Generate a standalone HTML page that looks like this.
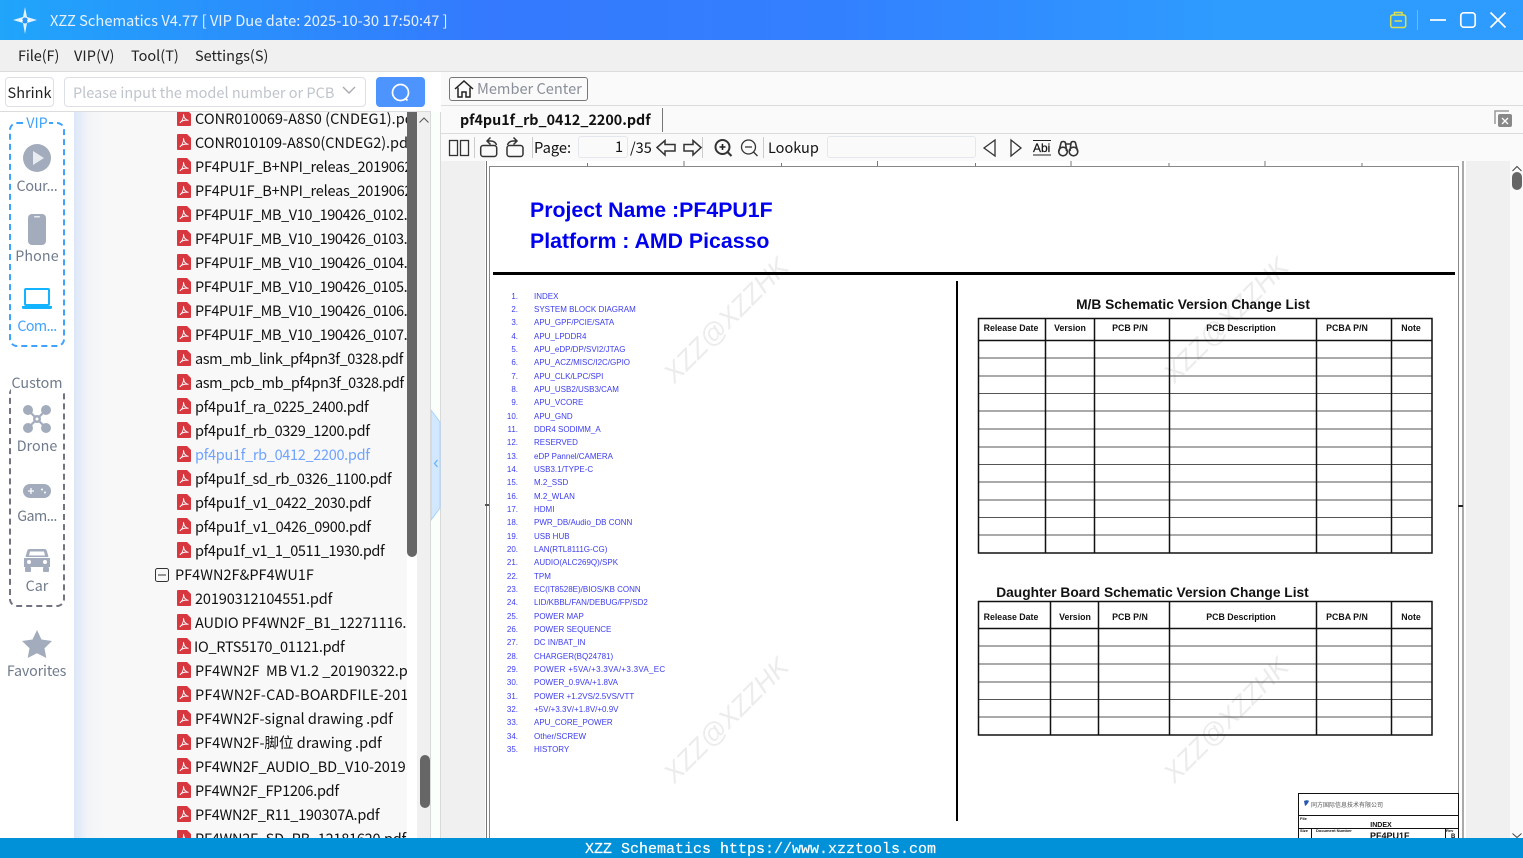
<!DOCTYPE html>
<html><head><meta charset="utf-8"><title>XZZ Schematics</title>
<style>
*{box-sizing:border-box}
html,body{margin:0;padding:0;width:1523px;height:858px;overflow:hidden;background:#fff;font-family:"Noto Sans CJK SC","Liberation Sans",sans-serif;color:#111}
.a{position:absolute}
.t{position:absolute;white-space:nowrap;line-height:20px}
#title{left:0;top:0;width:1523px;height:40px;background:linear-gradient(90deg,#20a5fb 0,#3479fe 32%,#3380ff 55%,#2e9bff 80%,#2e9bff 100%)}
#menu{left:0;top:40px;width:1523px;height:32px;background:#f0f0f0;border-bottom:1px solid #dcdcdc}
#menu span{position:absolute;top:6px;font-size:14.5px;line-height:20px;color:#222}
#tree{left:74px;top:112px;width:333px;height:726px;background:linear-gradient(90deg,#dbe6f7 0,#f2f4f8 14px,#f8f8f8 30px);overflow:hidden}
.f{position:absolute;left:121px;width:212px;height:24px;margin-top:1px;font-size:14.5px;line-height:24px;white-space:nowrap;overflow:hidden;color:#111;letter-spacing:-.32px}
.ic{position:absolute;left:103px;width:14px;height:16px}
.side{position:absolute;font-size:14.3px;color:#6f7a8c;line-height:20px;width:74px;text-align:center;white-space:nowrap;left:0}
.toc{position:absolute;left:534px;margin-top:1px;font:8px/10px "Liberation Sans",sans-serif;color:#3c3cf0;white-space:nowrap}
.n{position:absolute;left:498px;width:20px;margin-top:1px;text-align:right;font:8px/10px "Liberation Sans",sans-serif;color:#3c3cf0}
.wm{position:absolute;font:italic 26.5px/36px "Liberation Sans",sans-serif;color:#ececec;white-space:nowrap;transform:rotate(-45deg);transform-origin:center;width:200px;text-align:center}
</style></head><body>

<div class="a" id="title"></div>
<svg class="a" style="left:12px;top:7px" width="26" height="27" viewBox="0 0 26 27"><path d="M13 0 L15 10 L25 13 L15 16 L13 27 L11 16 L1 13 L11 10 Z" fill="#e4f2ff"/><circle cx="13" cy="13.5" r="3" fill="#2a95f8"/><circle cx="9.5" cy="13.5" r="1.3" fill="#fff"/><circle cx="16.5" cy="13.5" r="1.3" fill="#fff"/></svg>
<div class="t" style="left:50px;top:11px;font-size:14.7px;color:#e8f2ff">XZZ Schematics V4.77 [ VIP Due date: 2025-10-30 17:50:47 ]</div>
<svg class="a" style="left:1385px;top:8px" width="130" height="24" viewBox="0 0 130 24"><g fill="none" stroke="#dde24a" stroke-width="1.5"><rect x="5.7" y="7" width="15" height="12.5" rx="2"/><path d="M9.5 7V4.5h7.5V7M9.5 13h7.5"/></g><path d="M32.5 2v20" stroke="#6fb6ff" stroke-width="1"/><g fill="none" stroke="#fff" stroke-width="1.7"><path d="M45 12h16"/><rect x="75.8" y="4.8" width="14.4" height="14.4" rx="3"/><path d="M105.5 4.5l15 15M120.5 4.5l-15 15"/></g></svg>

<div class="a" id="menu"><span style="left:18px;letter-spacing:-.1px">File(F)</span><span style="left:74px;letter-spacing:.1px">VIP(V)</span><span style="left:131px">Tool(T)</span><span style="left:195px">Settings(S)</span></div>

<!-- search row -->
<div class="a" style="left:0;top:72px;width:431px;height:40px;background:#fff;border-bottom:1px solid #dcdcdc"></div>
<div class="a" style="left:5px;top:77px;width:49px;height:30px;border:1px solid #dcdfe6;border-radius:4px;font-size:14.5px;line-height:30px;text-align:center;color:#222;background:#fff">Shrink</div>
<div class="a" style="left:64px;top:77px;width:302px;height:30px;border:1px solid #dcdfe6;border-radius:4px;background:#fff"></div>
<div class="t" style="left:73px;top:83px;font-size:14.5px;color:#c0c4cc">Please input the model number or PCB</div>
<svg class="a" style="left:341px;top:85px" width="16" height="12"><path d="M2 2l6 6 6-6" fill="none" stroke="#a8abb2" stroke-width="1.4"/></svg>
<div class="a" style="left:376px;top:77px;width:49px;height:30px;border-radius:4px;background:#4d94ff"></div>
<svg class="a" style="left:390px;top:82px" width="22" height="22"><circle cx="10.5" cy="10.5" r="8" fill="none" stroke="#fff" stroke-width="1.7"/><path d="M15 16l2.5 2.5" stroke="#fff" stroke-width="1.7"/></svg>

<!-- left icon rail -->
<div class="a" style="left:9px;top:122px;width:56px;height:225px;border:2px dashed #3fa2ff;border-radius:8px"></div>
<div class="side" style="top:113px;color:#3fa2ff;background:none"><span style="background:#fff;padding:0 1px">VIP</span></div>
<svg class="a" style="left:23px;top:144px" width="28" height="28"><circle cx="14" cy="14" r="14" fill="#a3acbd"/><path d="M10 7l11 7-11 7z" fill="#e8ebf0"/></svg>
<div class="side" style="top:176px;letter-spacing:-.3px">Cour...</div>
<svg class="a" style="left:28px;top:214px" width="18" height="31"><rect width="18" height="31" rx="4" fill="#a3acbd"/><rect x="6" y="2" width="6" height="1.5" rx=".7" fill="#e8ebf0"/></svg>
<div class="side" style="top:246px;letter-spacing:.1px">Phone</div>
<svg class="a" style="left:22px;top:288px" width="30" height="21"><rect x="3" y="1" width="24" height="16" rx="1" fill="none" stroke="#12b4ff" stroke-width="2"/><path d="M0 18h30v1.5a1.5 1.5 0 0 1-1.5 1.5h-27A1.5 1.5 0 0 1 0 19.500z" fill="#12b4ff"/></svg>
<div class="side" style="top:316px;color:#3fa2ff;letter-spacing:-.6px">Com...</div>

<div class="a" style="left:9px;top:386px;width:56px;height:221px;border:2px dashed #6f7480;border-radius:8px"></div>
<div class="side" style="top:373px"><span style="background:#fff">Custom</span></div>
<svg class="a" style="left:22px;top:404px" width="30" height="30" viewBox="0 0 30 30"><g fill="none" stroke="#a3acbd" stroke-width="2.2"><path d="M7 7l16 16M23 7L7 23"/></g><g fill="#a3acbd"><circle cx="6" cy="6" r="5"/><circle cx="24" cy="6" r="5"/><circle cx="6" cy="24" r="5"/><circle cx="24" cy="24" r="5"/><circle cx="15" cy="15" r="4"/></g><circle cx="15" cy="15" r="1.500" fill="#fff"/></svg>
<div class="side" style="top:436px">Drone</div>
<svg class="a" style="left:23px;top:484px" width="28" height="14"><rect width="28" height="14" rx="7" fill="#a3acbd"/><path d="M5 7h6M8 4v6" stroke="#fff" stroke-width="1.3"/><circle cx="19" cy="5.500" r="1" fill="#fff"/><circle cx="22" cy="8.500" r="1" fill="#fff"/></svg>
<div class="side" style="top:506px;letter-spacing:-.6px">Gam...</div>
<svg class="a" style="left:23px;top:548px" width="28" height="24" viewBox="0 0 28 24"><path d="M7 1h14a3 3 0 0 1 3 2.500L25.500 9H2.500L4 3.500A3 3 0 0 1 7 1z M1 10h26v9H1z" fill="#a3acbd"/><rect x="2" y="19" width="6" height="5" rx="1" fill="#a3acbd"/><rect x="20" y="19" width="6" height="5" rx="1" fill="#a3acbd"/><path d="M7 3.500h14l1 4H6z" fill="#fff"/><circle cx="6" cy="14" r="2" fill="#fff"/><circle cx="22" cy="14" r="2" fill="#fff"/></svg>
<div class="side" style="top:576px">Car</div>
<svg class="a" style="left:22px;top:630px" width="30" height="28" viewBox="0 0 30 28"><path d="M15 0l4.500 9.500L30 11l-7.500 7.300L24.300 28 15 23.200 5.700 28l1.800-9.700L0 11l10.500-1.500z" fill="#a3acbd"/></svg>
<div class="side" style="top:661px;letter-spacing:-.15px;margin-left:-.5px">Favorites</div>

<!-- file tree -->
<div class="a" id="tree">
<svg width="0" height="0" style="position:absolute"><defs><symbol id="pdf" viewBox="0 0 14 16"><path d="M1 0h9l4 4v11a1 1 0 0 1-1 1H1a1 1 0 0 1-1-1V1a1 1 0 0 1 1-1z" fill="#d7373f"/><path d="M2.800 12.800C5 11.500 7 7.500 6.500 4.200 6.800 7.500 8.500 10 11.500 10.300 8.500 9.800 5 10.600 2.800 12.800z" fill="none" stroke="#fff" stroke-width=".9"/></symbol></defs></svg>
<svg class="ic" style="top:-2px"><use href="#pdf"/></svg><div class="f" style="top:-6px;letter-spacing:.05px">CONR010069-A8S0 (CNDEG1).pdf</div>
<svg class="ic" style="top:22px"><use href="#pdf"/></svg><div class="f" style="top:18px;letter-spacing:-.05px">CONR010109-A8S0(CNDEG2).pdf</div>
<svg class="ic" style="top:46px"><use href="#pdf"/></svg><div class="f" style="top:42px;letter-spacing:-.22px">PF4PU1F_B+NPI_releas_20190620</div>
<svg class="ic" style="top:70px"><use href="#pdf"/></svg><div class="f" style="top:66px;letter-spacing:-.22px">PF4PU1F_B+NPI_releas_20190621</div>
<svg class="ic" style="top:94px"><use href="#pdf"/></svg><div class="f" style="top:90px;letter-spacing:-.42px">PF4PU1F_MB_V10_190426_0102.pdf</div>
<svg class="ic" style="top:118px"><use href="#pdf"/></svg><div class="f" style="top:114px;letter-spacing:-.42px">PF4PU1F_MB_V10_190426_0103.pdf</div>
<svg class="ic" style="top:142px"><use href="#pdf"/></svg><div class="f" style="top:138px;letter-spacing:-.42px">PF4PU1F_MB_V10_190426_0104.pdf</div>
<svg class="ic" style="top:166px"><use href="#pdf"/></svg><div class="f" style="top:162px;letter-spacing:-.42px">PF4PU1F_MB_V10_190426_0105.pdf</div>
<svg class="ic" style="top:190px"><use href="#pdf"/></svg><div class="f" style="top:186px;letter-spacing:-.42px">PF4PU1F_MB_V10_190426_0106.pdf</div>
<svg class="ic" style="top:214px"><use href="#pdf"/></svg><div class="f" style="top:210px;letter-spacing:-.42px">PF4PU1F_MB_V10_190426_0107.pdf</div>
<svg class="ic" style="top:238px"><use href="#pdf"/></svg><div class="f" style="top:234px;letter-spacing:-.41px">asm_mb_link_pf4pn3f_0328.pdf</div>
<svg class="ic" style="top:262px"><use href="#pdf"/></svg><div class="f" style="top:258px;letter-spacing:-.41px">asm_pcb_mb_pf4pn3f_0328.pdf</div>
<svg class="ic" style="top:286px"><use href="#pdf"/></svg><div class="f" style="top:282px">pf4pu1f_ra_0225_2400.pdf</div>
<svg class="ic" style="top:310px"><use href="#pdf"/></svg><div class="f" style="top:306px">pf4pu1f_rb_0329_1200.pdf</div>
<svg class="ic" style="top:334px"><use href="#pdf"/></svg><div class="f" style="top:330px;color:#6fa3ff">pf4pu1f_rb_0412_2200.pdf</div>
<svg class="ic" style="top:358px"><use href="#pdf"/></svg><div class="f" style="top:354px;letter-spacing:-.37px">pf4pu1f_sd_rb_0326_1100.pdf</div>
<svg class="ic" style="top:382px"><use href="#pdf"/></svg><div class="f" style="top:378px">pf4pu1f_v1_0422_2030.pdf</div>
<svg class="ic" style="top:406px"><use href="#pdf"/></svg><div class="f" style="top:402px">pf4pu1f_v1_0426_0900.pdf</div>
<svg class="ic" style="top:430px"><use href="#pdf"/></svg><div class="f" style="top:426px;letter-spacing:-.39px">pf4pu1f_v1_1_0511_1930.pdf</div>
<svg class="a" style="left:81px;top:456px" width="14" height="14"><rect x=".5" y=".5" width="13" height="13" rx="2" fill="none" stroke="#333"/><path d="M3 7h8" stroke="#333"/></svg><div class="f" style="top:450px;left:101px;letter-spacing:0">PF4WN2F&amp;PF4WU1F</div>
<svg class="ic" style="top:478px"><use href="#pdf"/></svg><div class="f" style="top:474px;letter-spacing:-.12px">20190312104551.pdf</div>
<svg class="ic" style="top:502px"><use href="#pdf"/></svg><div class="f" style="top:498px;letter-spacing:-.1px">AUDIO PF4WN2F_B1_12271116.pdf</div>
<svg class="ic" style="top:526px"><use href="#pdf"/></svg><div class="f" style="top:522px;letter-spacing:-.28px;margin-left:-1px">IO_RTS5170_01121.pdf</div>
<svg class="ic" style="top:550px"><use href="#pdf"/></svg><div class="f" style="top:546px;letter-spacing:0">PF4WN2F&nbsp; MB V1.2 _20190322.pdf</div>
<svg class="ic" style="top:574px"><use href="#pdf"/></svg><div class="f" style="top:570px;letter-spacing:.2px">PF4WN2F-CAD-BOARDFILE-2019</div>
<svg class="ic" style="top:598px"><use href="#pdf"/></svg><div class="f" style="top:594px;letter-spacing:0">PF4WN2F-signal drawing .pdf</div>
<svg class="ic" style="top:622px"><use href="#pdf"/></svg><div class="f" style="top:618px;letter-spacing:0">PF4WN2F-脚位 drawing .pdf</div>
<svg class="ic" style="top:646px"><use href="#pdf"/></svg><div class="f" style="top:642px;letter-spacing:-.14px">PF4WN2F_AUDIO_BD_V10-2019</div>
<svg class="ic" style="top:670px"><use href="#pdf"/></svg><div class="f" style="top:666px;letter-spacing:-.27px">PF4WN2F_FP1206.pdf</div>
<svg class="ic" style="top:694px"><use href="#pdf"/></svg><div class="f" style="top:690px;letter-spacing:-.24px">PF4WN2F_R11_190307A.pdf</div>
<svg class="ic" style="top:718px"><use href="#pdf"/></svg><div class="f" style="top:714px;letter-spacing:-.24px">PF4WN2F_SD_RB_12181620.pdf</div>
</div>
<!-- tree scrollbars -->
<div class="a" style="left:407px;top:112px;width:10px;height:445px;background:#666;border-radius:0 0 5px 5px"></div>
<div class="a" style="left:417px;top:112px;width:14px;height:726px;background:#f0f0f0;border-right:1px solid #d9d9d9"></div>
<svg class="a" style="left:418px;top:116px" width="12" height="8"><path d="M1.500 6.500L6 2l4.500 4.500" fill="none" stroke="#555"/></svg>
<div class="a" style="left:420px;top:755px;width:10px;height:53px;background:#666;border-radius:5px"></div>
<div class="a" style="left:431px;top:112px;width:10px;height:726px;background:#fbfffb;border-right:1px solid #d9d9d9"></div>
<svg class="a" style="left:431px;top:408px" width="10" height="113"><path d="M0 2L9 14V100L0 112z" fill="#d2e8ff" stroke="#a9d3fb"/><path d="M6.500 52L3.500 55.500 6.500 59" fill="none" stroke="#6cb3f7" stroke-width="1.300"/></svg>

<!-- right header -->
<div class="a" style="left:441px;top:72px;width:1082px;height:34px;background:#fafafa;border-bottom:1px solid #dcdcdc"></div>
<div class="a" style="left:449px;top:77px;width:139px;height:24px;border:1px solid #777;border-radius:3px"></div>
<svg class="a" style="left:454px;top:79px" width="20" height="20" viewBox="0 0 20 20"><path d="M1 10L10 2l9 8M4 8.500V18h4v-5h4v5h4V8.500" fill="none" stroke="#222" stroke-width="1.500"/></svg>
<div class="t" style="left:477px;top:79px;font-size:14.6px;color:#8a8f99">Member Center</div>
<div class="a" style="left:441px;top:106px;width:1082px;height:28px;background:#fafafa;border-bottom:1px solid #dcdcdc"></div>
<div class="t" style="left:460px;top:110px;font:bold 14.3px/20px 'Noto Sans CJK SC','Liberation Sans',sans-serif;color:#111">pf4pu1f_rb_0412_2200.pdf</div>
<div class="a" style="left:662px;top:108px;width:1px;height:24px;background:#777"></div>
<svg class="a" style="left:1493px;top:109px" width="20" height="20"><path d="M2 15V2h14" fill="none" stroke="#999" stroke-width="1.500"/><rect x="5" y="5" width="14" height="13" rx="2" fill="#888"/><path d="M9 9l6 6M15 9l-6 6" stroke="#fff" stroke-width="1.300"/></svg>

<!-- toolbar -->
<div class="a" style="left:441px;top:134px;width:1082px;height:27px;background:#fafafa"></div>
<svg class="a" style="left:441px;top:134px" width="680" height="27" viewBox="0 0 680 27">
<g fill="none" stroke="#333" stroke-width="1.300">
<rect x="8.500" y="6.500" width="8" height="15"/><rect x="19.500" y="6.500" width="8" height="15"/>
<rect x="39.700" y="11.500" width="16" height="11" rx="2.500" stroke-width="1.500"/><path d="M46 7h4c3 0 5 2 5.500 4M49.500 3.500L46 7l3.500 3.500" stroke-width="1.500"/>
<rect x="66" y="11.500" width="16" height="11" rx="2.500" stroke-width="1.500"/><path d="M76 7h-4c-3 0-5 2-5.500 4M72.500 3.500L76 7l-3.500 3.500" stroke-width="1.500"/>
<path d="M216 13.500l8-7v4h10v6.500h-10v4z" stroke-width="1.500"/>
<path d="M260 13.500l-8-7v4h-9v6.500h9v4z" stroke-width="1.500"/>
<circle cx="281.500" cy="13" r="7" stroke-width="2"/><path d="M286.500 18l4 4" stroke-width="2"/>
<circle cx="307.500" cy="13" r="7"/><path d="M312.500 18l4 4M304 13h7"/>
<path d="M554 6l-11 8 11 8z"/><path d="M570 6l10 8-10 8z"/>
</g>
<path d="M278.500 13h6M281.500 10v6" stroke="#222" stroke-width="1.600"/>
<g stroke="#ccc"><path d="M33.500 3v21M91.500 3v21M261.500 3v21M322.500 3v21"/></g>
<g fill="none" stroke="#333" stroke-width="1.600"><circle cx="622" cy="17.500" r="4.300"/><circle cx="632.500" cy="17.500" r="4.300"/><path d="M618 17l2-8c.4-2 4-2 4.500 0l1 8M636.500 17l-2-8c-.4-2-4-2-4.500 0l-1 8M624.500 10h5"/></g>
<path d="M592 6.500h18M592 21h18" stroke="#222"/>
</svg>
<div class="t" style="left:534px;top:138px;font-size:14.7px">Page:</div>
<div class="a" style="left:578px;top:136px;width:50px;height:22px;border:1px solid #e4e7ed;border-radius:3px;background:#fafafa;font-size:14.500px;line-height:20px;text-align:right;padding-right:4px">1</div>
<div class="t" style="left:630px;top:138px;font-size:14.500px">/35</div>
<div class="t" style="left:768px;top:138px;font-size:14.500px">Lookup</div>
<div class="a" style="left:827px;top:136px;width:149px;height:22px;border:1px solid #e4e7ed;border-radius:3px;background:#fafafa"></div>
<div class="t" style="left:1033px;top:138px;font:12px/20px 'Liberation Sans',sans-serif;color:#111;-webkit-text-stroke:.2px #111">Abi</div>

<!-- page panel -->
<div class="a" style="left:441px;top:161px;width:1069px;height:677px;background:#f0f0f0"></div>
<div class="a" style="left:1510px;top:161px;width:13px;height:677px;background:#fafafa"></div>
<svg class="a" style="left:1511px;top:165px" width="12" height="7"><path d="M1.500 6L6 1.500 10.500 6" fill="none" stroke="#444"/></svg>
<div class="a" style="left:1512px;top:172px;width:10px;height:18px;background:#666;border-radius:5px"></div>
<svg class="a" style="left:1511px;top:833px" width="12" height="5"><path d="M1.500 .5L6 4.500 10.500 .5" fill="none" stroke="#444"/></svg>
<div class="a" style="left:485px;top:161px;width:981px;height:677px;background:#fff"></div>
<div class="a" style="left:486px;top:161px;width:1px;height:677px;background:#777"></div>
<div class="a" style="left:1462px;top:161px;width:2px;height:677px;background:#aaa"></div>
<div class="a" style="left:489px;top:166px;width:970px;height:672px;background:#fff;border:1px solid #888;border-width:1px 1px 0 1px"></div>
<svg class="a" style="left:489px;top:161px" width="970" height="5"><path d="M98.500 2v3M195 0v5M292.500 2v3M388.500 0v5M486.500 2v3M582 0v5M680 2v3M776 0v5M873 2v3" stroke="#777"/></svg>

<!-- PDF -->
<div class="wm" style="left:626px;top:302px">XZZ@XZZHK</div>
<div class="wm" style="left:1126px;top:302px">XZZ@XZZHK</div>
<div class="wm" style="left:626px;top:702px">XZZ@XZZHK</div>
<div class="wm" style="left:1126px;top:702px">XZZ@XZZHK</div>

<div class="t" style="left:530px;top:197px;font:bold 21.3px/26px 'Liberation Sans',sans-serif;color:#0000f0">Project Name :PF4PU1F</div>
<div class="t" style="left:530px;top:228px;font:bold 21.3px/26px 'Liberation Sans',sans-serif;color:#0000f0">Platform : AMD Picasso</div>
<div class="a" style="left:493px;top:272px;width:962px;height:2.500px;background:#000"></div>
<div class="a" style="left:956px;top:281px;width:2px;height:540px;background:#000"></div>

<div class="n" style="top:291px">1.</div><div class="toc" style="top:291px">INDEX</div>
<div class="n" style="top:304px">2.</div><div class="toc" style="top:304px">SYSTEM BLOCK DIAGRAM</div>
<div class="n" style="top:317px">3.</div><div class="toc" style="top:317px">APU_GPF/PCIE/SATA</div>
<div class="n" style="top:331px">4.</div><div class="toc" style="top:331px">APU_LPDDR4</div>
<div class="n" style="top:344px">5.</div><div class="toc" style="top:344px">APU_eDP/DP/SVI2/JTAG</div>
<div class="n" style="top:357px">6.</div><div class="toc" style="top:357px">APU_ACZ/MISC/I2C/GPIO</div>
<div class="n" style="top:371px">7.</div><div class="toc" style="top:371px">APU_CLK/LPC/SPI</div>
<div class="n" style="top:384px">8.</div><div class="toc" style="top:384px">APU_USB2/USB3/CAM</div>
<div class="n" style="top:397px">9.</div><div class="toc" style="top:397px">APU_VCORE</div>
<div class="n" style="top:411px">10.</div><div class="toc" style="top:411px">APU_GND</div>
<div class="n" style="top:424px">11.</div><div class="toc" style="top:424px">DDR4 SODIMM_A</div>
<div class="n" style="top:437px">12.</div><div class="toc" style="top:437px">RESERVED</div>
<div class="n" style="top:451px">13.</div><div class="toc" style="top:451px">eDP Pannel/CAMERA</div>
<div class="n" style="top:464px">14.</div><div class="toc" style="top:464px">USB3.1/TYPE-C</div>
<div class="n" style="top:477px">15.</div><div class="toc" style="top:477px">M.2_SSD</div>
<div class="n" style="top:491px">16.</div><div class="toc" style="top:491px">M.2_WLAN</div>
<div class="n" style="top:504px">17.</div><div class="toc" style="top:504px">HDMI</div>
<div class="n" style="top:517px">18.</div><div class="toc" style="top:517px">PWR_DB/Audio_DB CONN</div>
<div class="n" style="top:531px">19.</div><div class="toc" style="top:531px">USB HUB</div>
<div class="n" style="top:544px">20.</div><div class="toc" style="top:544px">LAN(RTL8111G-CG)</div>
<div class="n" style="top:557px">21.</div><div class="toc" style="top:557px">AUDIO(ALC269Q)/SPK</div>
<div class="n" style="top:571px">22.</div><div class="toc" style="top:571px">TPM</div>
<div class="n" style="top:584px">23.</div><div class="toc" style="top:584px">EC(IT8528E)/BIOS/KB CONN</div>
<div class="n" style="top:597px">24.</div><div class="toc" style="top:597px">LID/KBBL/FAN/DEBUG/FP/SD2</div>
<div class="n" style="top:611px">25.</div><div class="toc" style="top:611px">POWER MAP</div>
<div class="n" style="top:624px">26.</div><div class="toc" style="top:624px">POWER SEQUENCE</div>
<div class="n" style="top:637px">27.</div><div class="toc" style="top:637px">DC IN/BAT_IN</div>
<div class="n" style="top:651px">28.</div><div class="toc" style="top:651px">CHARGER(BQ24781)</div>
<div class="n" style="top:664px">29.</div><div class="toc" style="top:664px;letter-spacing:.3px">POWER +5VA/+3.3VA/+3.3VA_EC</div>
<div class="n" style="top:677px">30.</div><div class="toc" style="top:677px">POWER_0.9VA/+1.8VA</div>
<div class="n" style="top:691px">31.</div><div class="toc" style="top:691px">POWER +1.2VS/2.5VS/VTT</div>
<div class="n" style="top:704px">32.</div><div class="toc" style="top:704px">+5V/+3.3V/+1.8V/+0.9V</div>
<div class="n" style="top:717px">33.</div><div class="toc" style="top:717px">APU_CORE_POWER</div>
<div class="n" style="top:731px">34.</div><div class="toc" style="top:731px">Other/SCREW</div>
<div class="n" style="top:744px">35.</div><div class="toc" style="top:744px">HISTORY</div>

<svg class="a" style="left:970px;top:290px" width="490" height="548" viewBox="970 290 490 548" font-family="Liberation Sans" font-weight="bold" fill="#111">
<text x="1193" y="309" font-size="13.75" text-anchor="middle">M/B Schematic Version Change List</text>
<g stroke="#555" stroke-width="1"><path d="M978 358h454M978 376h454M978 393.500h454M978 411h454M978 429h454M978 447h454M978 464.500h454M978 482h454M978 500h454M978 517.500h454M978 535h454"/></g>
<g stroke="#111" stroke-width="1.500" fill="none"><rect x="978.500" y="318.500" width="453.500" height="234.500"/><path d="M978 340.500h454M1045.500 318v235M1094.500 318v235M1169.500 318v235M1316.500 318v235M1391.500 318v235"/></g>
<g font-size="8.800" text-anchor="middle"><text x="1011" y="331">Release Date</text><text x="1070" y="331">Version</text><text x="1130" y="331">PCB P/N</text><text x="1241" y="331">PCB Description</text><text x="1347" y="331">PCBA P/N</text><text x="1411" y="331">Note</text></g>
<text x="1152.500" y="597" font-size="13.75" text-anchor="middle">Daughter Board Schematic Version Change List</text>
<g stroke="#555" stroke-width="1"><path d="M978 646h454M978 664h454M978 682h454M978 699.500h454M978 717h454"/></g>
<g stroke="#111" stroke-width="1.500" fill="none"><rect x="978.500" y="601.500" width="453.500" height="133.500"/><path d="M978 628.500h454M1050.500 601v134M1098.500 601v134M1169.500 601v134M1316.500 601v134M1391.500 601v134"/></g>
<g font-size="8.800" text-anchor="middle"><text x="1011" y="620">Release Date</text><text x="1075" y="620">Version</text><text x="1130" y="620">PCB P/N</text><text x="1241" y="620">PCB Description</text><text x="1347" y="620">PCBA P/N</text><text x="1411" y="620">Note</text></g>
<!-- title block -->
<g stroke="#111" stroke-width="1" fill="none"><path d="M1298.500 838V793.500H1458.500V838M1298 815.500h161M1298 828.500h161M1311.500 828v10M1445.500 828v10"/></g>
<path d="M1304 801c2-1 4-1 5 0-1 2-2 4-4 5z" fill="#2a5ab0"/>
<text x="1311" y="807" font-size="6" font-weight="normal" fill="#555" font-family="Noto Sans CJK SC">同方国际信息技术有限公司</text>
<text x="1300" y="820" font-size="4">File</text><text x="1381" y="827" font-size="7" text-anchor="middle">INDEX</text>
<text x="1300" y="832" font-size="4">Size</text><text x="1316" y="832" font-size="4">Document Number</text><text x="1446" y="832" font-size="4">Rev</text>
<text x="1370" y="839" font-size="9">PF4PU1F</text><text x="1451" y="838" font-size="6">B</text>
</svg>
<div class="a" style="left:485px;top:504px;width:4px;height:2px;background:#555"></div>
<div class="a" style="left:1458px;top:505px;width:5px;height:2px;background:#222"></div>

<!-- bottom bar -->
<div class="a" style="left:0;top:838px;width:1523px;height:20px;background:#0091d8"></div>
<div class="t" style="left:585px;top:841px;height:17px;overflow:hidden;font:15px/17px 'Liberation Mono',monospace;color:#fff;-webkit-text-stroke:.2px #fff">XZZ Schematics https://www.xzztools.com</div>
</body></html>
